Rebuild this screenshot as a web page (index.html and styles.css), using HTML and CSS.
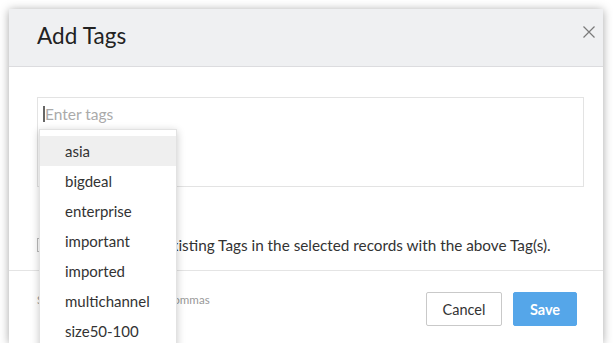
FILE: index.html
```html
<!DOCTYPE html>
<html>
<head>
<meta charset="utf-8">
<link rel="stylesheet" href="styles.css">
</head>
<body>
<div class="modal">
  <div class="modal-header">
    <h1 class="title">Add Tags</h1>
    <span class="close" aria-label="Close">
      <svg width="12" height="12" viewBox="0 0 12 12"><path d="M0.5 0.5 L11.5 11.5 M11.5 0.5 L0.5 11.5" stroke="#7a7a7a" stroke-width="1.2" fill="none"/></svg>
    </span>
  </div>
  <div class="modal-body">
    <div class="tag-input">
      <span class="caret"></span><span class="placeholder">Enter tags</span>
    </div>
    <label class="replace-row">
      <span class="checkbox"></span>
      <span>Replace all existing Tags in the selected records with the above Tag(s).</span>
    </label>
  </div>
  <div class="modal-footer">
    <span class="hint">Separate multiple tags by commas</span>
    <div class="actions">
      <button class="btn btn-cancel">Cancel</button>
      <button class="btn btn-save">Save</button>
    </div>
  </div>
  <ul class="dropdown">
    <li class="item active">asia</li>
    <li class="item">bigdeal</li>
    <li class="item">enterprise</li>
    <li class="item">important</li>
    <li class="item">imported</li>
    <li class="item">multichannel</li>
    <li class="item">size50-100</li>
  </ul>
</div>
</body>
</html>
```
FILE: styles.css
```css
* { box-sizing: border-box; }
html, body { margin: 0; padding: 0; background: #ffffff; }
body { font-family: Lato, "Open Sans", Arial, sans-serif; color: #333; }

.modal {
  position: relative;
  margin: 9px 0 0 9px;
  width: 594px;
  height: 334px;
  background: #fff;
  overflow: hidden;
  box-shadow: 0 1px 9px rgba(0,0,0,0.35);
  display: flex;
  flex-direction: column;
}

.modal-header {
  height: 58px;
  flex: none;
  background: #eff0f2;
  border-bottom: 1px solid #dcdcdf;
  display: flex;
  align-items: center;
  justify-content: space-between;
  padding: 0 8px 4px 28px;
}
.title {
  margin: 0;
  font-size: 22.5px;
  font-weight: 400;
  color: #222;
  letter-spacing: 0.1px;
}
.close { display: flex; margin-top: -8px; }

.modal-body {
  flex: 1;
  padding: 30px 19px 0 28px;
}
.tag-input {
  height: 90px;
  border: 1px solid #e3e3e3;
  padding: 8px 5px;
  display: flex;
  align-items: flex-start;
}
.caret {
  width: 2px;
  height: 16px;
  background: #666;
}
.placeholder {
  font-size: 15.5px;
  color: #aaa;
  line-height: 16px;
}

.replace-row {
  margin-top: 49px;
  display: flex;
  align-items: center;
  gap: 37px;
  font-size: 15.3px;
  color: #333;
}
.checkbox {
  width: 14px;
  height: 14px;
  border: 1px solid #bbb;
  background: #fff;
}

.modal-footer {
  height: 73px;
  flex: none;
  border-top: 1px solid #e4e4e4;
  display: flex;
  justify-content: space-between;
  align-items: flex-start;
  padding: 21px 26px 0 28px;
}
.hint {
  font-size: 11.6px;
  color: #999;
  margin-top: 1px;
}
.actions { display: flex; gap: 11px; }
.btn {
  height: 34px;
  font-family: inherit;
  font-size: 14.5px;
  border-radius: 2px;
  cursor: pointer;
}
.btn-cancel {
  width: 76px;
  background: #fff;
  border: 1px solid #c9c9c9;
  color: #333;
}
.btn-save {
  width: 64px;
  background: #55a6e9;
  border: 1px solid #55a6e9;
  color: #fff;
  font-weight: 700;
}

.dropdown {
  position: absolute;
  left: 30px;
  top: 120px;
  width: 138px;
  height: 230px;
  margin: 0;
  padding: 6px 0 0 0;
  list-style: none;
  background: #fff;
  border: 1px solid #e2e2e2;
  box-shadow: 0 2px 8px rgba(0,0,0,0.22);
}
.item {
  height: 30px;
  line-height: 30px;
  padding-left: 25px;
  font-size: 15px;
  color: #333;
}
.item.active { background: #efefef; }
```
